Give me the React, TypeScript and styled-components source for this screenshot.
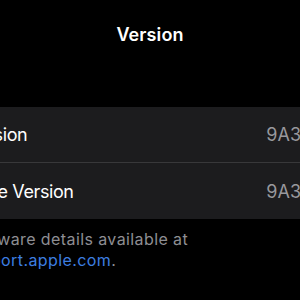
import React from "react";
import styled, { createGlobalStyle } from "styled-components";

const Global = createGlobalStyle`
  html, body { margin: 0; padding: 0; background: #000; }
  body { font-family: Inter, "Noto Sans", "Liberation Sans", sans-serif; -webkit-font-smoothing: antialiased; }
`;

const Viewport = styled.div`
  width: 300px;
  height: 300px;
  overflow: hidden;
  background: #000;
`;

const NavBar = styled.div`
  height: 107px;
  padding-top: 24px;
  box-sizing: border-box;
  display: flex;
  justify-content: center;
`;

const Title = styled.h1`
  margin: 0;
  font-size: 18px;
  line-height: 22px;
  font-weight: 600;
  color: #fff;
  letter-spacing: 0.1px;
`;

const List = styled.div`
  width: 430px;
  margin-left: -70px;
  display: flex;
  flex-direction: column;
`;

const Card = styled.div`
  margin: 0 20px;
  background: #1c1c1e;
  border-radius: 10px;
  display: flex;
  flex-direction: column;
`;

const Row = styled.div<{ $last?: boolean }>`
  height: 56px;
  margin-left: 16px;
  padding-right: 16px;
  display: flex;
  align-items: center;
  justify-content: space-between;
  box-sizing: border-box;
  border-bottom: ${(p) => (p.$last ? "none" : "1px solid #38383a")};
  font-size: 18px;
`;

const Label = styled.span`
  color: #fff;
  letter-spacing: -0.4px;
`;

const Value = styled.span`
  color: #98989d;
`;

const Footer = styled.p`
  margin: 0;
  padding: 10px 36px 0 32px;
  font-size: 16px;
  line-height: 21px;
  letter-spacing: 0.4px;
  color: #8e8e93;
`;

const Link = styled.span`
  color: #3d7ee0;
`;

export default function App() {
  return (
    <>
      <Global />
      <Viewport>
        <NavBar>
          <Title>Version</Title>
        </NavBar>
        <List>
          <Card>
            <Row>
              <Label>Version</Label>
              <Value>9A304</Value>
            </Row>
            <Row $last>
              <Label>Case Version</Label>
              <Value>9A304</Value>
            </Row>
          </Card>
          <Footer>
            Firmware details available at
            <br />
            <Link>support.apple.com</Link>.
          </Footer>
        </List>
      </Viewport>
    </>
  );
}
